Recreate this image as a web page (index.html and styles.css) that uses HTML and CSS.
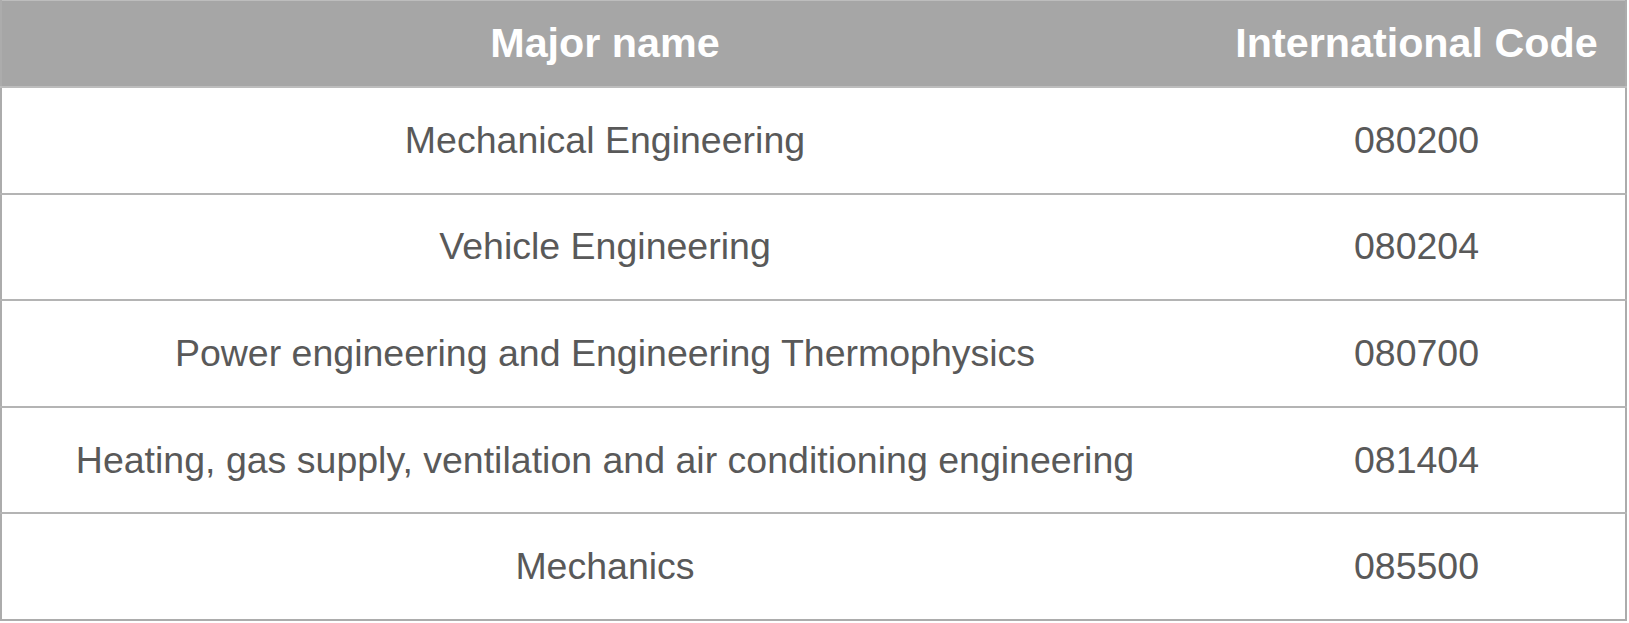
FILE: index.html
```html
<!DOCTYPE html>
<html>
<head>
<meta charset="utf-8">
<link rel="stylesheet" href="styles.css">
</head>
<body>
<table class="majors">
  <thead>
    <tr class="head-row">
      <th class="col-name">Major name</th>
      <th class="col-code">International Code</th>
    </tr>
  </thead>
  <tbody>
    <tr><td>Mechanical Engineering</td><td>080200</td></tr>
    <tr><td>Vehicle Engineering</td><td>080204</td></tr>
    <tr><td>Power engineering and Engineering Thermophysics</td><td>080700</td></tr>
    <tr><td>Heating, gas supply, ventilation and air conditioning engineering</td><td>081404</td></tr>
    <tr><td>Mechanics</td><td>085500</td></tr>
  </tbody>
</table>
</body>
</html>
```
FILE: styles.css
```css
html, body {
  margin: 0;
  padding: 0;
  background: #ffffff;
}

.majors {
  width: 1627px;
  border-collapse: collapse;
  table-layout: fixed;
  font-family: "Liberation Sans", Arial, sans-serif;
  border: 2px solid #acacac;
  border-top: 1px solid #bdbdbd;
}

.col-name {
  width: 1206px;
}

.head-row th {
  height: 85px;
  padding: 0;
  background: #a6a6a6;
  color: #ffffff;
  font-size: 41.3px;
  font-weight: bold;
  text-align: center;
  border-bottom: 2px solid #bdbdbd;
}

.majors td {
  height: 104.6px;
  padding: 0;
  text-align: center;
  color: #595959;
  font-size: 37.5px;
  border-top: 2px solid #b4b4b4;
}
```
